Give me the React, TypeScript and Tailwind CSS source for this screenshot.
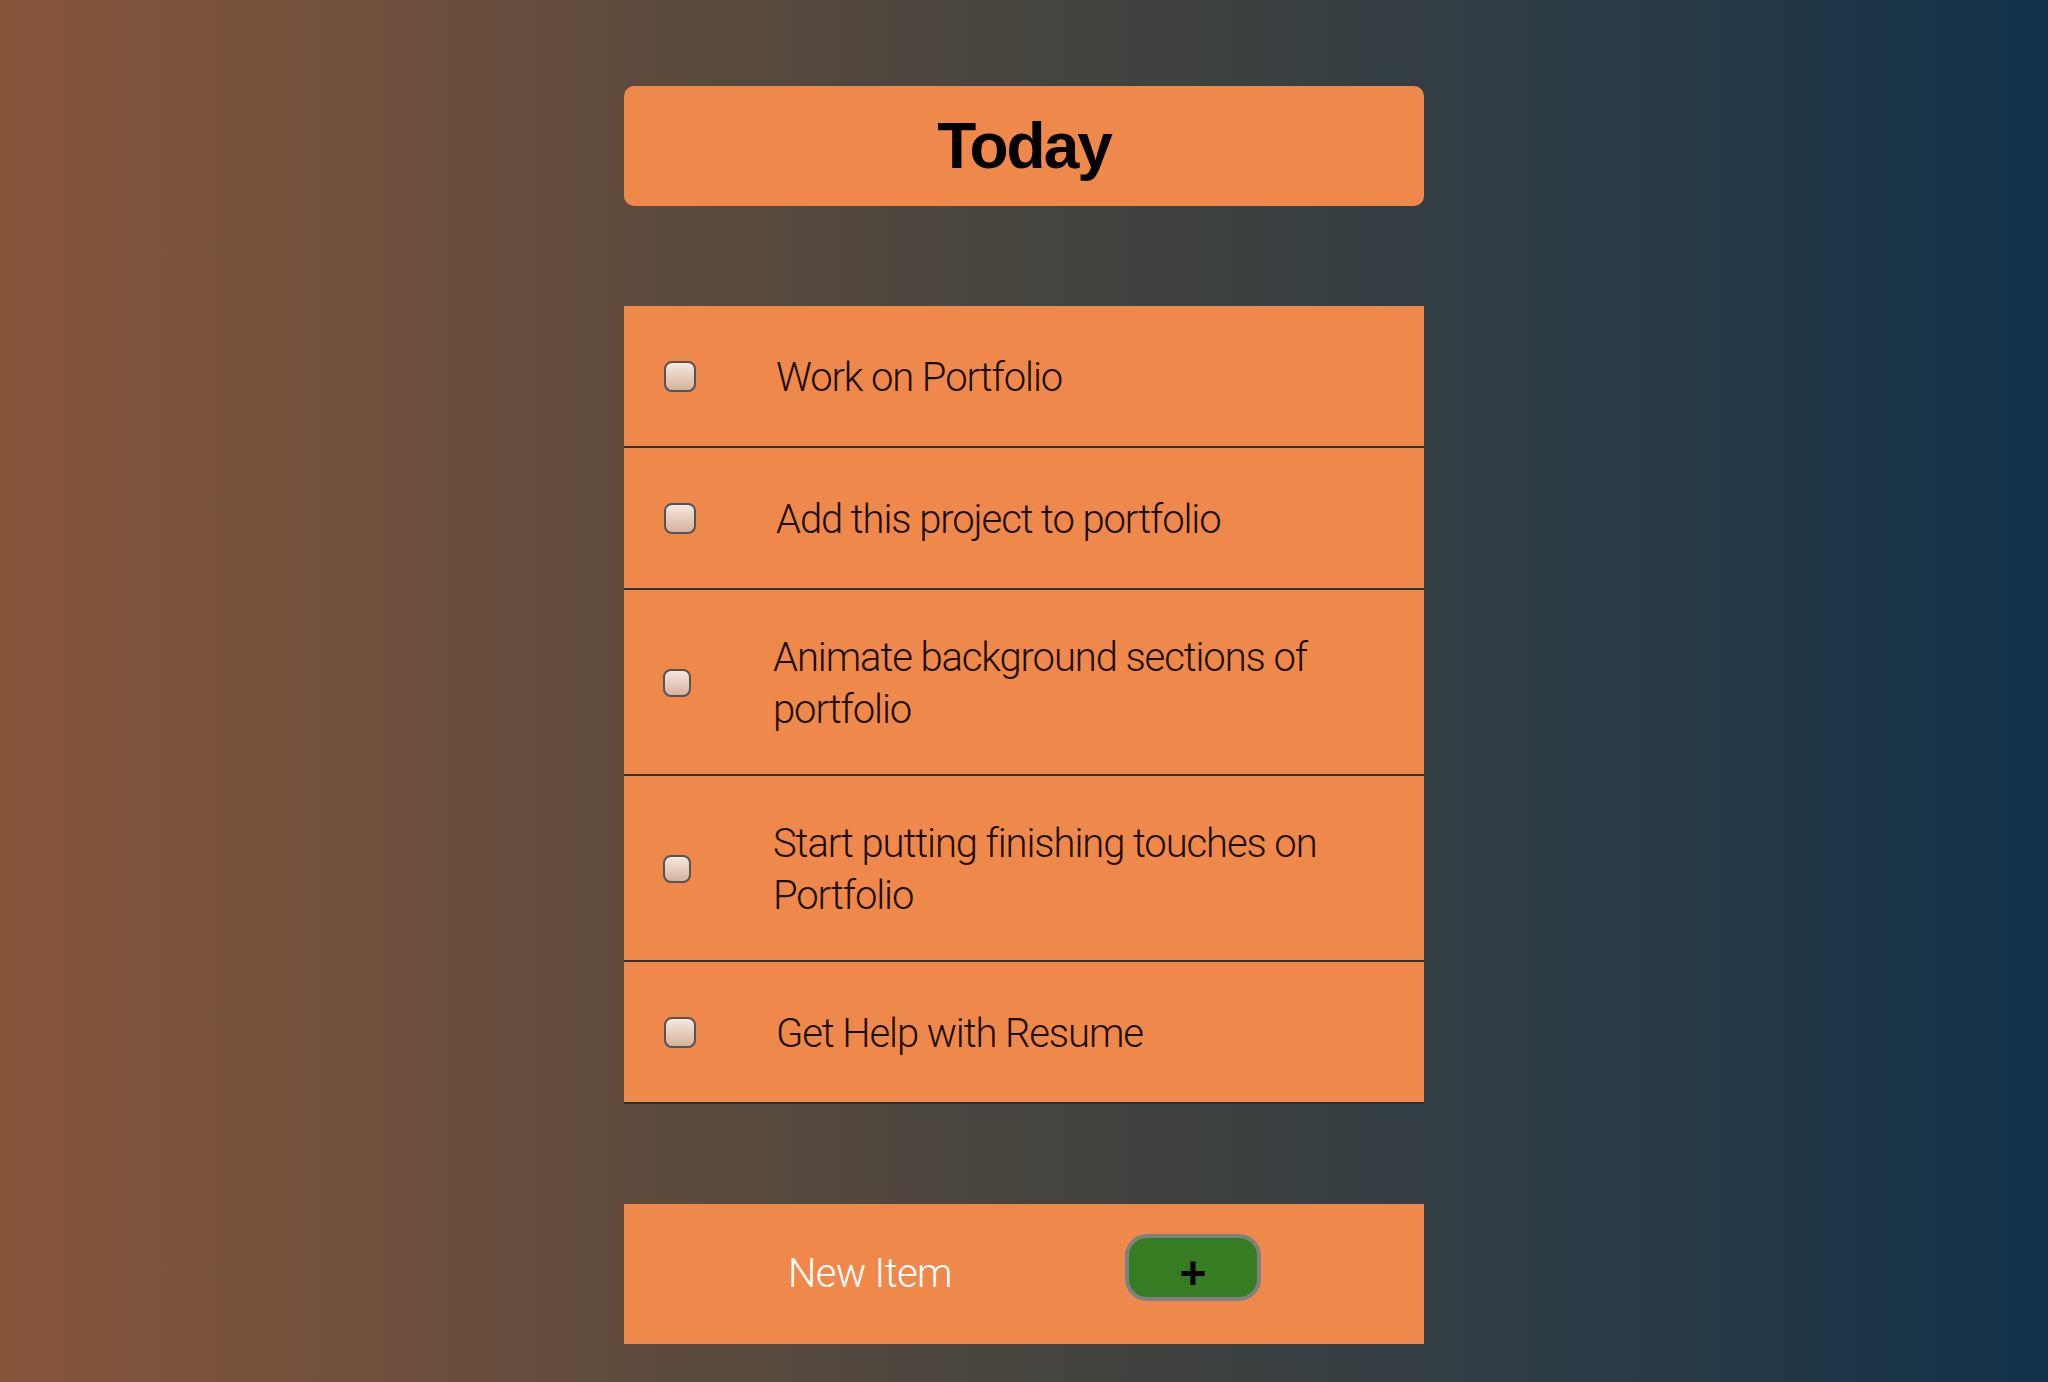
import { useState } from 'react'

type Todo = {
  id: number
  text: string
  wrap?: boolean
}

const todos: Todo[] = [
  { id: 1, text: 'Work on Portfolio' },
  { id: 2, text: 'Add this project to portfolio' },
  { id: 3, text: 'Animate background sections of portfolio', wrap: true },
  { id: 4, text: 'Start putting finishing touches on Portfolio', wrap: true },
  { id: 5, text: 'Get Help with Resume' },
]

function TodoRow({ todo, last }: { todo: Todo; last: boolean }) {
  return (
    <li
      className={`flex min-h-[142px] items-center border-b-2 bg-[#ee894b] pt-[42px] pb-[38px] pr-[40px] ${
        last ? 'border-[#1e3242]' : 'border-[#303336]'
      } ${todo.wrap ? 'pl-[39px]' : 'pl-[40px]'}`}
    >
      <span
        className={`-mt-[3px] block shrink-0 rounded-[8px] border-2 border-[#545454] bg-linear-to-b from-[#f4e8df] to-[#d6b29d] ${
          todo.wrap ? 'h-[28px] w-[28px]' : 'h-[31px] w-[32px]'
        }`}
      />
      <span
        className={`max-w-[608px] text-[40px] leading-[52px] font-light tracking-[-1.1px] text-[#1c0d04] ${
          todo.wrap ? 'ml-[82px]' : 'ml-[80px]'
        }`}
      >
        {todo.text}
      </span>
    </li>
  )
}

export default function App() {
  const [newItem, setNewItem] = useState('')

  return (
    <div
      className="flex min-h-screen flex-col items-center bg-linear-to-r from-[#87553a] via-[#46443e] to-[#12324a] pt-[86px] pb-[38px]"
      style={{ fontFamily: 'Roboto, "Liberation Sans", sans-serif' }}
    >
      <div className="flex h-[120px] w-[800px] items-center justify-center rounded-[10px] bg-[#ee894b]">
        <h1 className="font-['Liberation_Sans',sans-serif] text-[64px] leading-none font-bold tracking-[-2px] text-black">
          Today
        </h1>
      </div>

      <ul className="mt-[100px] w-[800px]">
        {todos.map((t, i) => (
          <TodoRow key={t.id} todo={t} last={i === todos.length - 1} />
        ))}
      </ul>

      <div className="mt-[100px] flex h-[140px] w-[800px] items-center bg-[#ee894b] pl-[164px]">
        <input
          value={newItem}
          onChange={(e) => setNewItem(e.target.value)}
          placeholder="New Item"
          className="w-[337px] bg-transparent text-[40px] leading-[52px] font-light tracking-[-0.6px] text-white outline-none placeholder:text-white"
        />
        <button className="mb-[13px] flex h-[67px] w-[136px] items-center justify-center rounded-[22px] border-4 border-[#808080] bg-[#357c22] pt-[10px] font-['Liberation_Sans',sans-serif] text-[46px] leading-none font-bold text-black">
          +
        </button>
      </div>
    </div>
  )
}
